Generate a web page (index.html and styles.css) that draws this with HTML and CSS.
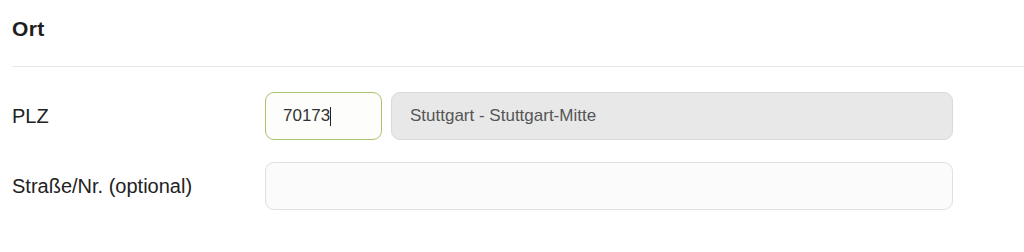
FILE: index.html
```html
<!DOCTYPE html>
<html lang="de">
<head>
<meta charset="utf-8">
<link rel="stylesheet" href="styles.css">
</head>
<body>
<section class="panel">
  <h2 class="title">Ort</h2>
  <div class="rows">
    <div class="row">
      <label class="label">PLZ</label>
      <div class="fields">
        <div class="input plz"><span>70173</span><span class="caret"></span></div>
        <div class="input city">Stuttgart - Stuttgart-Mitte</div>
      </div>
    </div>
    <div class="row">
      <label class="label">Straße/Nr. (optional)</label>
      <div class="fields">
        <div class="input street"></div>
      </div>
    </div>
  </div>
</section>
</body>
</html>
```
FILE: styles.css
```css
html, body {
  margin: 0;
  padding: 0;
  background: #ffffff;
  font-family: "Liberation Sans", Arial, sans-serif;
  color: #222;
}
.panel {
  padding: 0 0 0 12px;
}
.title {
  margin: 0;
  font-size: 21px;
  font-weight: bold;
  letter-spacing: 0.4px;
  color: #1e1e1e;
  padding-top: 17px;
  height: 49px;
  line-height: 24px;
  border-bottom: 1px solid #e8e8e8;
  padding-bottom: 0;
  box-sizing: content-box;
}
.rows {
  padding-top: 25px;
  display: flex;
  flex-direction: column;
  gap: 22px;
}
.row {
  display: flex;
  align-items: center;
}
.label {
  width: 253px;
  flex: none;
  font-size: 20px;
  color: #222;
}
.fields {
  display: flex;
  gap: 9px;
  width: 688px;
}
.input {
  box-sizing: border-box;
  height: 48px;
  border-radius: 9px;
  border: 1px solid #dcdcdc;
  display: flex;
  align-items: center;
  font-size: 17px;
  color: #333;
}
.plz {
  width: 117px;
  flex: none;
  border-color: #a9c46c;
  background: #fdfdfb;
  padding-left: 17px;
}
.caret {
  display: inline-block;
  width: 1px;
  height: 19px;
  background: #222;
}
.city {
  flex: 1;
  background: #e8e8e8;
  border-color: #dadada;
  padding-left: 18px;
  color: #555;
}
.street {
  flex: 1;
  background: #fbfbfb;
  border-color: #e0e0e0;
}
```
